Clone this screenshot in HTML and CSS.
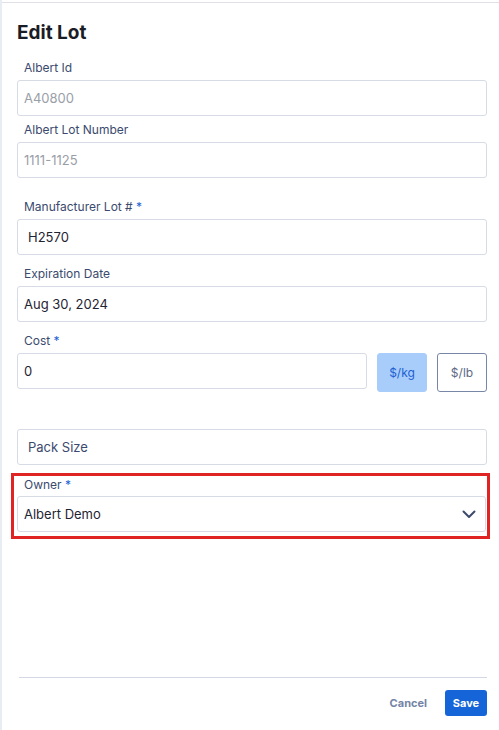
FILE: index.html
```html
<!DOCTYPE html>
<html lang="en">
<head>
<meta charset="utf-8">
<title>Edit Lot</title>
<link rel="stylesheet" href="styles.css">
</head>
<body>
<div class="page">
  <div class="modal">
    <h1 class="title">Edit Lot</h1>

    <div class="field first">
      <label class="label">Albert Id</label>
      <div class="input disabled">A40800</div>
    </div>
    <div class="field tight">
      <label class="label">Albert Lot Number</label>
      <div class="input disabled">1111-1125</div>
    </div>

    <div class="field group">
      <label class="label">Manufacturer Lot # <span class="req">*</span></label>
      <div class="input indent">H2570</div>
    </div>
    <div class="field">
      <label class="label">Expiration Date</label>
      <div class="input">Aug 30, 2024</div>
    </div>
    <div class="field">
      <label class="label">Cost <span class="req">*</span></label>
      <div class="cost-row">
        <div class="input grow">0</div>
        <button class="unit active">$/kg</button>
        <button class="unit">$/lb</button>
      </div>
    </div>

    <div class="input pack indent">Pack Size</div>

    <div class="field highlight">
      <label class="label">Owner <span class="req">*</span></label>
      <div class="input select">
        <span>Albert Demo</span>
        <svg class="chev" width="14" height="9" viewBox="0 0 14 9"><path d="M1.5 1.5 L7 7 L12.5 1.5" fill="none" stroke="#3c4a6b" stroke-width="2" stroke-linecap="round" stroke-linejoin="round"/></svg>
      </div>
    </div>

    <div class="footer">
      <button class="cancel">Cancel</button>
      <button class="save">Save</button>
    </div>
  </div>
</div>
</body>
</html>
```

FILE: styles.css
```css
* { box-sizing: border-box; }
html, body { margin: 0; padding: 0; }
body {
  font-family: Inter, "Noto Sans", "Liberation Sans", sans-serif;
  background: #ffffff;
  color: #1f2433;
}
.page {
  height: 730px;
  border-left: 2px solid #e8ecf3;
  padding-top: 2px;
}
.modal {
  height: 728px;
  border-top: 1px solid #dfe1e6;
  padding: 0 12px 0 15px;
  display: flex;
  flex-direction: column;
}
.title {
  margin: 18px 0 0 0;
  font-size: 19px;
  line-height: 24px;
  font-weight: 700;
  color: #1b1d26;
}
.field { margin-top: 11px; }
.field.first { margin-top: 15px; }
.field.tight { margin-top: 6px; }
.field.group { margin-top: 21px; }
.label {
  display: block;
  font-size: 12px;
  line-height: 16px;
  color: #3b4a6e;
  padding-left: 7px;
  margin-bottom: 4px;
}
.req { color: #1a5fd6; }
.input {
  height: 36px;
  border: 1px solid #d7dbe5;
  border-radius: 3px;
  display: flex;
  align-items: center;
  padding: 0 6px;
  font-size: 13px;
  color: #1f2433;
  background: #fff;
}
.input.disabled { color: #9a9ea8; }
.input.indent { padding-left: 10px; }
.cost-row { display: flex; align-items: flex-start; gap: 10px; }
.input.grow { width: 350px; flex: none; }
.unit {
  width: 50px;
  height: 39px;
  border-radius: 3px;
  font-family: inherit;
  font-size: 12px;
  padding: 0;
  border: 1px solid #7886a8;
  background: #fff;
  color: #5d6a85;
}
.unit.active {
  background: #a9cdfb;
  border-color: #a9cdfb;
  color: #1d5fd1;
}
.pack {
  margin-top: 37px;
  color: #3b4a6e;
}
.highlight {
  margin: 8px -3px 0 -6px;
  border: 3px solid #e02424;
  padding: 1px 1px 4px 3px;
}
.highlight .label { margin-bottom: 3px; }
.select { justify-content: space-between; padding-right: 9px; }
.chev { display: block; }
.footer {
  margin-top: auto;
  margin-bottom: 14px;
  border-top: 1px solid #d3d8e4;
  padding-top: 12px;
  display: flex;
  justify-content: flex-end;
  align-items: center;
  gap: 18px;
  margin-left: 2px;
}
.cancel {
  background: none;
  border: none;
  padding: 0;
  font-family: inherit;
  font-size: 11px;
  font-weight: 700;
  color: #7584a6;
}
.save {
  width: 42px;
  height: 26px;
  border: none;
  border-radius: 3px;
  background: #1565d8;
  color: #fff;
  font-family: inherit;
  font-size: 11px;
  font-weight: 700;
  padding: 0;
}
```
